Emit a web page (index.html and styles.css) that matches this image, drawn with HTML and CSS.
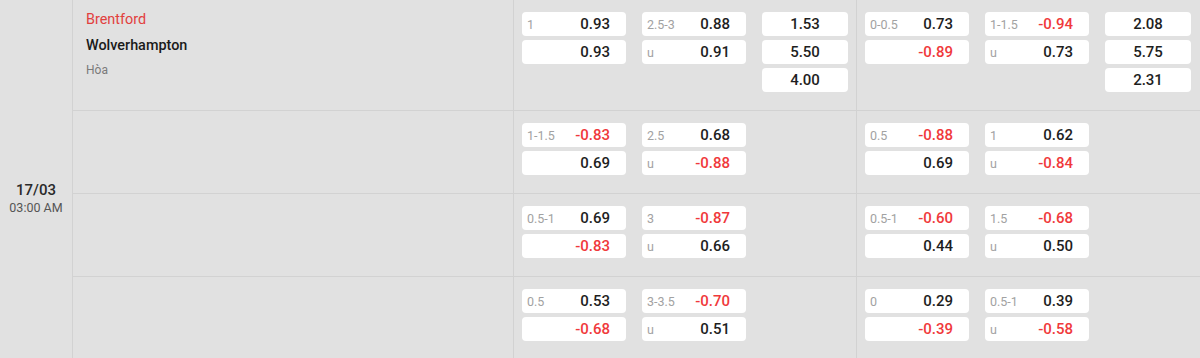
FILE: index.html
```html
<!DOCTYPE html>
<html lang="vi">
<head>
<meta charset="utf-8">
<title>Odds</title>
<link rel="stylesheet" href="styles.css">
</head>
<body>
<div class="board">
  <div class="date-col">
    <div class="date">17/03</div>
    <div class="time">03:00 AM</div>
  </div>
  <div class="rows">
    <div class="row">
      <div class="teams">
        <div class="home">Brentford</div>
        <div class="away">Wolverhampton</div>
        <div class="draw">Hòa</div>
      </div>
      <div class="odds">
        <div class="stack">
          <div class="cell"><span class="lbl">1</span><span class="val">0.93</span></div>
          <div class="cell"><span class="lbl"></span><span class="val">0.93</span></div>
        </div>
        <div class="stack">
          <div class="cell"><span class="lbl">2.5-3</span><span class="val">0.88</span></div>
          <div class="cell"><span class="lbl">u</span><span class="val">0.91</span></div>
        </div>
        <div class="stack narrow">
          <div class="cell center"><span class="val">1.53</span></div>
          <div class="cell center"><span class="val">5.50</span></div>
          <div class="cell center"><span class="val">4.00</span></div>
        </div>
      </div>
      <div class="odds">
        <div class="stack">
          <div class="cell"><span class="lbl">0-0.5</span><span class="val">0.73</span></div>
          <div class="cell"><span class="lbl"></span><span class="val neg">-0.89</span></div>
        </div>
        <div class="stack">
          <div class="cell"><span class="lbl">1-1.5</span><span class="val neg">-0.94</span></div>
          <div class="cell"><span class="lbl">u</span><span class="val">0.73</span></div>
        </div>
        <div class="stack narrow">
          <div class="cell center"><span class="val">2.08</span></div>
          <div class="cell center"><span class="val">5.75</span></div>
          <div class="cell center"><span class="val">2.31</span></div>
        </div>
      </div>
    </div>

    <div class="row">
      <div class="teams"></div>
      <div class="odds">
        <div class="stack">
          <div class="cell"><span class="lbl">1-1.5</span><span class="val neg">-0.83</span></div>
          <div class="cell"><span class="lbl"></span><span class="val">0.69</span></div>
        </div>
        <div class="stack">
          <div class="cell"><span class="lbl">2.5</span><span class="val">0.68</span></div>
          <div class="cell"><span class="lbl">u</span><span class="val neg">-0.88</span></div>
        </div>
      </div>
      <div class="odds">
        <div class="stack">
          <div class="cell"><span class="lbl">0.5</span><span class="val neg">-0.88</span></div>
          <div class="cell"><span class="lbl"></span><span class="val">0.69</span></div>
        </div>
        <div class="stack">
          <div class="cell"><span class="lbl">1</span><span class="val">0.62</span></div>
          <div class="cell"><span class="lbl">u</span><span class="val neg">-0.84</span></div>
        </div>
      </div>
    </div>

    <div class="row">
      <div class="teams"></div>
      <div class="odds">
        <div class="stack">
          <div class="cell"><span class="lbl">0.5-1</span><span class="val">0.69</span></div>
          <div class="cell"><span class="lbl"></span><span class="val neg">-0.83</span></div>
        </div>
        <div class="stack">
          <div class="cell"><span class="lbl">3</span><span class="val neg">-0.87</span></div>
          <div class="cell"><span class="lbl">u</span><span class="val">0.66</span></div>
        </div>
      </div>
      <div class="odds">
        <div class="stack">
          <div class="cell"><span class="lbl">0.5-1</span><span class="val neg">-0.60</span></div>
          <div class="cell"><span class="lbl"></span><span class="val">0.44</span></div>
        </div>
        <div class="stack">
          <div class="cell"><span class="lbl">1.5</span><span class="val neg">-0.68</span></div>
          <div class="cell"><span class="lbl">u</span><span class="val">0.50</span></div>
        </div>
      </div>
    </div>

    <div class="row">
      <div class="teams"></div>
      <div class="odds">
        <div class="stack">
          <div class="cell"><span class="lbl">0.5</span><span class="val">0.53</span></div>
          <div class="cell"><span class="lbl"></span><span class="val neg">-0.68</span></div>
        </div>
        <div class="stack">
          <div class="cell"><span class="lbl">3-3.5</span><span class="val neg">-0.70</span></div>
          <div class="cell"><span class="lbl">u</span><span class="val">0.51</span></div>
        </div>
      </div>
      <div class="odds">
        <div class="stack">
          <div class="cell"><span class="lbl">0</span><span class="val">0.29</span></div>
          <div class="cell"><span class="lbl"></span><span class="val neg">-0.39</span></div>
        </div>
        <div class="stack">
          <div class="cell"><span class="lbl">0.5-1</span><span class="val">0.39</span></div>
          <div class="cell"><span class="lbl">u</span><span class="val neg">-0.58</span></div>
        </div>
      </div>
    </div>
  </div>
</div>
</body>
</html>
```

FILE: styles.css
```css
* {
  box-sizing: border-box;
}

html, body {
  margin: 0;
  padding: 0;
  background: #e1e1e1;
  font-family: Roboto, "Liberation Sans", Arial, sans-serif;
  color: #222;
}

.board {
  display: flex;
  width: 1200px;
  height: 358px;
  overflow: hidden;
}

.date-col {
  width: 73px;
  flex: none;
  border-right: 1px solid #d2d2d2;
  display: flex;
  flex-direction: column;
  align-items: center;
  justify-content: center;
  padding-top: 36px;
}

.date {
  font-size: 15px;
  font-weight: 500;
  line-height: 20px;
  color: #2a2a2a;
}

.time {
  font-size: 12.5px;
  line-height: 15px;
  color: #555;
}

.rows {
  flex: 1;
  display: flex;
  flex-direction: column;
}

.row {
  display: grid;
  grid-template-columns: 441px 343px 343px;
  border-bottom: 1px solid #d2d2d2;
  flex: none;
}

.row:last-child {
  border-bottom: none;
}

.teams {
  border-right: 1px solid #d2d2d2;
  padding: 10px 13px 0;
}

.home,
.away {
  font-size: 14.4px;
  line-height: 20px;
}

.home {
  color: #e2403e;
}

.away {
  margin-top: 6px;
  font-weight: 500;
  color: #1a1a1a;
}

.draw {
  margin-top: 4px;
  font-size: 12px;
  line-height: 20px;
  color: #7a7a7a;
}

.odds {
  display: flex;
  align-items: flex-start;
  gap: 16px;
  padding: 12px 0 18px 8px;
}

.odds:nth-child(2) {
  border-right: 1px solid #d2d2d2;
}

.stack {
  width: 104px;
  display: flex;
  flex-direction: column;
  gap: 4px;
}

.stack.narrow {
  width: 86px;
}

.cell {
  height: 24px;
  background: #fff;
  border-radius: 4px;
  display: flex;
  align-items: center;
  justify-content: space-between;
  padding: 0 16px 0 5px;
}

.cell.center {
  justify-content: center;
  padding: 0;
}

.lbl {
  font-size: 12.5px;
  color: #a2a2a2;
}

.val {
  font-size: 15px;
  font-weight: 500;
  color: #1e1e1e;
}

.val.neg {
  color: #f0393b;
}
```
